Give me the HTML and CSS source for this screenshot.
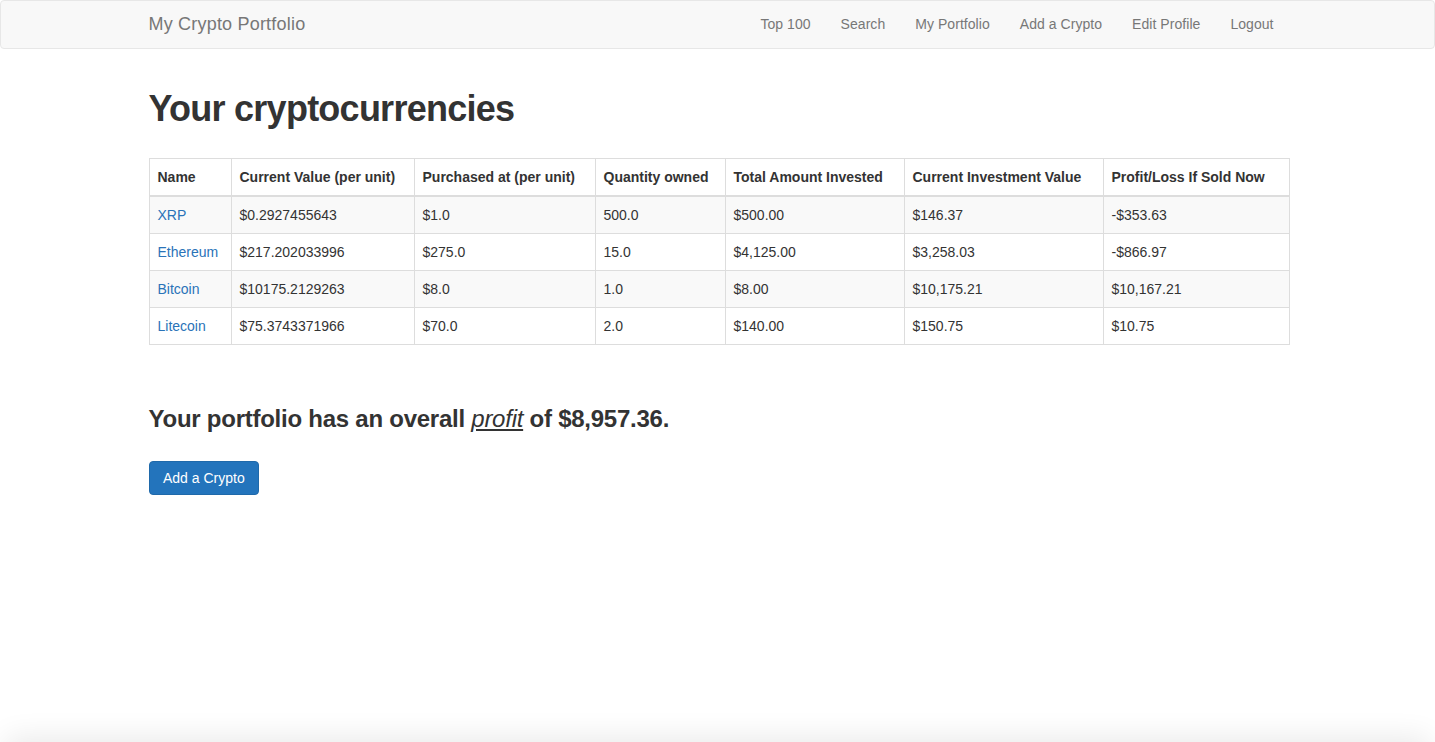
FILE: index.html
```html
<!DOCTYPE html>
<html lang="en">
<head>
<meta charset="utf-8">
<title>My Crypto Portfolio</title>
<link rel="stylesheet" href="styles.css">
</head>
<body>
<nav class="navbar">
  <div class="container nav-inner">
    <a class="brand" href="#">My Crypto Portfolio</a>
    <ul class="nav-links">
      <li><a href="#">Top 100</a></li>
      <li><a href="#">Search</a></li>
      <li><a href="#">My Portfolio</a></li>
      <li><a href="#">Add a Crypto</a></li>
      <li><a href="#">Edit Profile</a></li>
      <li><a href="#">Logout</a></li>
    </ul>
  </div>
</nav>
<main class="container">
  <h1 class="title">Your cryptocurrencies</h1>
  <table class="table">
    <colgroup>
      <col class="c1"><col class="c2"><col class="c3"><col class="c4"><col class="c5"><col class="c6"><col class="c7">
    </colgroup>
    <thead>
      <tr>
        <th>Name</th>
        <th>Current Value (per unit)</th>
        <th>Purchased at (per unit)</th>
        <th>Quantity owned</th>
        <th>Total Amount Invested</th>
        <th>Current Investment Value</th>
        <th>Profit/Loss If Sold Now</th>
      </tr>
    </thead>
    <tbody>
      <tr><td><a href="#">XRP</a></td><td>$0.2927455643</td><td>$1.0</td><td>500.0</td><td>$500.00</td><td>$146.37</td><td>-$353.63</td></tr>
      <tr><td><a href="#">Ethereum</a></td><td>$217.202033996</td><td>$275.0</td><td>15.0</td><td>$4,125.00</td><td>$3,258.03</td><td>-$866.97</td></tr>
      <tr><td><a href="#">Bitcoin</a></td><td>$10175.2129263</td><td>$8.0</td><td>1.0</td><td>$8.00</td><td>$10,175.21</td><td>$10,167.21</td></tr>
      <tr><td><a href="#">Litecoin</a></td><td>$75.3743371966</td><td>$70.0</td><td>2.0</td><td>$140.00</td><td>$150.75</td><td>$10.75</td></tr>
    </tbody>
  </table>
  <h3 class="summary">Your portfolio has an overall <em class="u">profit</em> of $8,957.36.</h3>
  <a class="btn" href="#">Add a Crypto</a>
</main>
<div class="bottom-shadow"></div>
</body>
</html>
```
FILE: styles.css
```css
* { box-sizing: border-box; }
html, body { margin: 0; padding: 0; }
body {
  font-family: "Liberation Sans", Arial, sans-serif;
  font-size: 14px;
  line-height: 1.428571;
  color: #333;
  background: #fff;
  overflow: hidden;
  height: 742px;
}
a { text-decoration: none; }
.container {
  width: 1140px;
  margin: 0 auto;
  position: relative;
  left: 1px;
}
.navbar {
  height: 49px;
  background: #f8f8f8;
  border: 1px solid #e7e7e7;
  border-radius: 4px;
}
.nav-inner {
  display: flex;
  justify-content: space-between;
  align-items: center;
  height: 45px;
}
.brand {
  font-size: 18px;
  color: #777;
  line-height: 20px;
  letter-spacing: 0.2px;
}
.nav-links {
  list-style: none;
  margin: 0;
  padding: 0;
  display: flex;
}
.nav-links a {
  display: block;
  padding: 14px 15px;
  color: #777;
  line-height: 20px;
  letter-spacing: 0.05px;
}
.title {
  font-size: 36px;
  font-weight: 700;
  line-height: 1.1;
  margin: 40px 0 29px;
  color: #333;
  letter-spacing: -0.75px;
}
.table {
  width: 1140px;
  border-collapse: collapse;
  table-layout: fixed;
  border: 1px solid #ddd;
  margin-bottom: 20px;
}
.c1 { width: 82px; }
.c2 { width: 183px; }
.c3 { width: 181px; }
.c4 { width: 130px; }
.c5 { width: 179px; }
.c6 { width: 199px; }
.c7 { width: 186px; }
.table th, .table td {
  border: 1px solid #ddd;
  padding: 8px;
  line-height: 20px;
  text-align: left;
  vertical-align: top;
  white-space: nowrap;
}
.table th {
  font-weight: 700;
  border-bottom-width: 2px;
  vertical-align: bottom;
}
.table tbody tr:nth-child(odd) { background: #f9f9f9; }
.table td a { color: #2a73b8; }
.summary {
  font-size: 24px;
  font-weight: 700;
  line-height: 1.1;
  margin: 61px 0 29px;
  color: #333;
  letter-spacing: -0.25px;
}
.u { text-decoration: underline; font-weight: 400; }
.btn {
  display: inline-block;
  padding: 6px 13px 6px 13.5px;
  font-size: 14px;
  line-height: 20px;
  color: #fff;
  background: #2374bc;
  border: 1px solid #1f69aa;
  border-radius: 4px;
}
.bottom-shadow {
  position: fixed;
  left: 10px;
  right: 10px;
  top: 742px;
  height: 40px;
  box-shadow: 0 0 30px 4px rgba(0,0,0,0.09);
  background: #eee;
}
```
